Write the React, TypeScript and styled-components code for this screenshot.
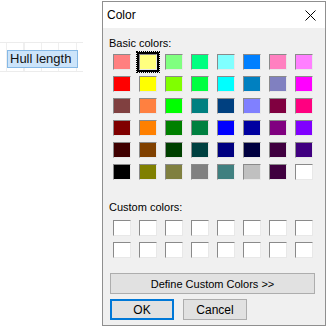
import React from 'react';
import styled, {createGlobalStyle} from 'styled-components';

const GlobalStyle = createGlobalStyle`
  body {
    margin: 0;
    background: #ffffff;
    font-family: "Liberation Sans", Arial, sans-serif;
  }
`

const Page = styled.div`
  display: flex;
  align-items: flex-start;
  width: 328px;
  height: 329px;
  overflow: hidden;
`

const SheetArea = styled.div`
  width: 102px;
  flex-shrink: 0;
  padding-top: 42px;
`

const SheetGrid = styled.div`
  width: 83px;
  height: 30px;
  border-top: 1px solid #ececec;
  border-bottom: 1px solid #ececec;
  background-image: repeating-linear-gradient(to right, transparent 0, transparent 6px, #efefef 6px, #efefef 7px, transparent 7px, transparent 17.5px);
  padding: 6px 0 0 7px;
  box-sizing: border-box;
`

const CellLabel = styled.div`
  display: inline-block;
  width: 71px;
  height: 18px;
  box-sizing: border-box;
  background: #cce4fa;
  border: 1px solid #86b9e6;
  font-size: 13px;
  line-height: 16px;
  padding-left: 2px;
  color: #111;
  white-space: nowrap;
`

const Dialog = styled.div`
  margin-top: 1px;
  width: 224px;
  height: 325px;
  box-sizing: border-box;
  border: 1px solid #8f8f8f;
  background: #f0f0f0;
  display: flex;
  flex-direction: column;
`

const TitleBar = styled.div`
  height: 26px;
  background: #ffffff;
  display: flex;
  align-items: center;
  justify-content: space-between;
  padding: 0 9px 0 4px;
`

const Title = styled.span`
  font-size: 12px;
  color: #000;
`

const Body = styled.div`
  display: flex;
  flex-direction: column;
  padding: 0 10px 0 7px;
`

const GroupLabel = styled.div<{top: number}>`
  margin-top: ${p => p.top}px;
  margin-left: -1px;
  font-size: 11px;
  line-height: 14px;
  color: #000;
`

const SwatchGrid = styled.div<{top: number}>`
  margin-top: ${p => p.top}px;
  margin-left: 3px;
  display: grid;
  grid-template-columns: repeat(8, 18px);
  grid-auto-rows: 16px;
  column-gap: 8px;
  row-gap: 6px;
`

const Swatch = styled.div<{selected?: boolean}>`
  position: relative;
  box-sizing: border-box;
  border: 1px solid;
  border-color: #8a8a8a #e8e8e8 #e8e8e8 #8a8a8a;
  box-shadow: ${p => p.selected ? '0 0 0 1px #000, 0 0 0 2px #000' : 'none'};

  &::after {
    content: '';
    display: ${p => p.selected ? 'block' : 'none'};
    position: absolute;
    inset: -4px;
    border: 1px dotted #000;
  }
`

const WideButton = styled.button`
  margin-top: 15px;
  height: 21px;
  box-sizing: border-box;
  background: #e1e1e1;
  border: 1px solid #adadad;
  font-family: "Liberation Sans", Arial, sans-serif;
  font-size: 11px;
  color: #000;
  padding: 0;
`

const ButtonRow = styled.div`
  margin-top: 5px;
  display: flex;
  gap: 9px;
`

const DialogButton = styled.button<{primary?: boolean}>`
  width: 64px;
  height: 21px;
  box-sizing: border-box;
  background: #e1e1e1;
  border: ${p => p.primary ? '2px solid #0078d7' : '1px solid #adadad'};
  font-family: "Liberation Sans", Arial, sans-serif;
  font-size: 12px;
  color: #000;
  padding: 0;
`

const basicColors = [
  '#FF8080', '#FFFF80', '#80FF80', '#00FF80', '#80FFFF', '#0080FF', '#FF80C0', '#FF80FF',
  '#FF0000', '#FFFF00', '#80FF00', '#00FF40', '#00FFFF', '#0080C0', '#8080C0', '#FF00FF',
  '#804040', '#FF8040', '#00FF00', '#008080', '#004080', '#8080FF', '#800040', '#FF0080',
  '#800000', '#FF8000', '#008000', '#008040', '#0000FF', '#0000A0', '#800080', '#8000FF',
  '#400000', '#804000', '#004000', '#004040', '#000080', '#000040', '#400040', '#400080',
  '#000000', '#808000', '#808040', '#808080', '#408080', '#C0C0C0', '#400040', '#FFFFFF',
]

const CloseIcon = () => (
  <svg width="11" height="11" viewBox="0 0 11 11">
    <path d="M0.5 0.5 L10.5 10.5 M10.5 0.5 L0.5 10.5" stroke="#000" strokeWidth="1" fill="none"/>
  </svg>
)

export default function App() {
  return (
    <Page>
      <GlobalStyle/>
      <SheetArea>
        <SheetGrid>
          <CellLabel>Hull length</CellLabel>
        </SheetGrid>
      </SheetArea>

      <Dialog>
        <TitleBar>
          <Title>Color</Title>
          <CloseIcon/>
        </TitleBar>
        <Body>
          <GroupLabel top={8}>Basic colors:</GroupLabel>
          <SwatchGrid top={4}>
            {basicColors.map((c, i) => (
              <Swatch key={i} selected={i === 1} style={{background: c}}/>
            ))}
          </SwatchGrid>

          <GroupLabel top={20}>Custom colors:</GroupLabel>
          <SwatchGrid top={6}>
            {Array.from({length: 16}).map((_, i) => (
              <Swatch key={i} style={{background: '#ffffff'}}/>
            ))}
          </SwatchGrid>

          <WideButton>Define Custom Colors &gt;&gt;</WideButton>
          <ButtonRow>
            <DialogButton primary>OK</DialogButton>
            <DialogButton>Cancel</DialogButton>
          </ButtonRow>
        </Body>
      </Dialog>
    </Page>
  )
}
